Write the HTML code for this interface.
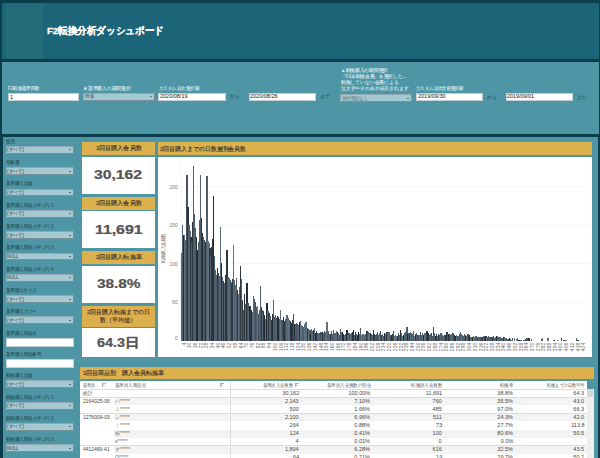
<!DOCTYPE html><html><head><meta charset="utf-8"><style>
*{margin:0;padding:0;box-sizing:border-box}
html,body{width:600px;height:458px;overflow:hidden;background:#0b3d4a;font-family:"Liberation Sans",sans-serif;}
.abs{position:absolute}
.dd{position:absolute;background:#a6c8d1;border:1px solid #75929b;border-top-color:#8eabb3;border-left-color:#8eabb3;}
.dd i{position:absolute;right:2.2px;top:2.4px;width:0;height:0;border-left:1.2px solid transparent;border-right:1.2px solid transparent;border-top:1.9px solid #1a1a1a}
.inp{position:absolute;background:#fff;border:1px solid #c3d0d3;}
.gold{position:absolute;background:#dbb04d;}
.wh{position:absolute;background:#fff}
</style></head><body>
<div class="abs" style="left:2px;top:2.5px;width:597px;height:56.5px;background:#1c6578"></div>
<div class="abs" style="left:6px;top:2.5px;width:36.5px;height:56.5px;background:#246b79"></div>
<div class="f" style="position:absolute;left:46.50px;top:-35.20px;height:130.00px;line-height:130.00px;font-size:100px;color:#fff;white-space:nowrap;transform:scale(0.09539,0.1);transform-origin:left center;font-weight:bold;-webkit-text-stroke:3px #fff;">F2転換分析ダッシュボード</div>
<div class="abs" style="left:1.5px;top:62px;width:597px;height:72px;background:#4e95a5"></div>
<div class="f" style="position:absolute;left:8.30px;top:55.70px;height:65.00px;line-height:65.00px;font-size:50px;color:#d9e9ed;white-space:nowrap;transform:scale(0.08846,0.1);transform-origin:left center;-webkit-text-stroke:1.1px currentColor;">F2転換基準回数</div>
<div class="inp" style="left:7.7px;top:92.7px;width:71.6px;height:8px;"></div>
<div class="f" style="position:absolute;left:10.00px;top:60.95px;height:71.50px;line-height:71.50px;font-size:55.0px;color:#111;white-space:nowrap;transform:scale(0.10000,0.1);transform-origin:left center;">1</div>
<div class="f" style="position:absolute;left:83.30px;top:55.50px;height:65.00px;line-height:65.00px;font-size:50px;color:#d9e9ed;white-space:nowrap;transform:scale(0.09521,0.1);transform-origin:left center;-webkit-text-stroke:1.1px currentColor;">★基準購入の期間選択</div>
<div class="dd" style="left:83.3px;top:92.7px;width:71.4px;height:8.2px;"><i></i></div>
<div class="f" style="position:absolute;left:85.00px;top:63.90px;height:65.00px;line-height:65.00px;font-size:50px;color:#61787f;white-space:nowrap;transform:scale(0.09000,0.1);transform-origin:left center;-webkit-text-stroke:1.1px currentColor;">時季</div>
<div class="f" style="position:absolute;left:158.70px;top:55.50px;height:65.00px;line-height:65.00px;font-size:50px;color:#d9e9ed;white-space:nowrap;transform:scale(0.08811,0.1);transform-origin:left center;-webkit-text-stroke:1.1px currentColor;">カスタム日次選択期</div>
<div class="inp" style="left:158.3px;top:92.7px;width:68px;height:8px;"></div>
<div class="f" style="position:absolute;left:160.00px;top:60.45px;height:71.50px;line-height:71.50px;font-size:55.0px;color:#111;white-space:nowrap;transform:scale(0.09990,0.1);transform-origin:left center;">2020/08/19</div>
<div class="f" style="position:absolute;left:229.50px;top:64.20px;height:65.00px;line-height:65.00px;font-size:50px;color:#2a5863;white-space:nowrap;transform:scale(0.09020,0.1);transform-origin:left center;-webkit-text-stroke:1.1px currentColor;">から</div>
<div class="inp" style="left:248.5px;top:92.5px;width:67.7px;height:8px;"></div>
<div class="f" style="position:absolute;left:250.20px;top:60.35px;height:71.50px;line-height:71.50px;font-size:55.0px;color:#111;white-space:nowrap;transform:scale(0.09990,0.1);transform-origin:left center;">2020/08/26</div>
<div class="f" style="position:absolute;left:319.70px;top:64.00px;height:65.00px;line-height:65.00px;font-size:50px;color:#2a5863;white-space:nowrap;transform:scale(0.09118,0.1);transform-origin:left center;-webkit-text-stroke:1.1px currentColor;">まで</div>
<div class="f" style="position:absolute;left:340.70px;top:37.70px;height:65.00px;line-height:65.00px;font-size:50px;color:#d9e9ed;white-space:nowrap;transform:scale(0.09391,0.1);transform-origin:left center;-webkit-text-stroke:1.1px currentColor;">▲転換購入の期間選択</div>
<div class="f" style="position:absolute;left:340.70px;top:43.65px;height:65.00px;line-height:65.00px;font-size:50px;color:#d9e9ed;white-space:nowrap;transform:scale(0.09278,0.1);transform-origin:left center;-webkit-text-stroke:1.1px currentColor;">「F2未転換会員」を選択した…</div>
<div class="f" style="position:absolute;left:340.70px;top:49.60px;height:65.00px;line-height:65.00px;font-size:50px;color:#d9e9ed;white-space:nowrap;transform:scale(0.09441,0.1);transform-origin:left center;-webkit-text-stroke:1.1px currentColor;">転換していない会員による</div>
<div class="f" style="position:absolute;left:340.70px;top:55.55px;height:65.00px;line-height:65.00px;font-size:50px;color:#d9e9ed;white-space:nowrap;transform:scale(0.09549,0.1);transform-origin:left center;-webkit-text-stroke:1.1px currentColor;">注文データのみが表示されます</div>
<div class="dd" style="left:340.3px;top:94.2px;width:71.4px;height:7.6px;"><i></i></div>
<div class="f" style="position:absolute;left:342.00px;top:65.50px;height:65.00px;line-height:65.00px;font-size:50px;color:#65838c;white-space:nowrap;transform:scale(0.08709,0.1);transform-origin:left center;-webkit-text-stroke:1.1px currentColor;">日付指定なし</div>
<div class="f" style="position:absolute;left:416.20px;top:55.50px;height:65.00px;line-height:65.00px;font-size:50px;color:#d9e9ed;white-space:nowrap;transform:scale(0.08628,0.1);transform-origin:left center;-webkit-text-stroke:1.1px currentColor;">カスタム日次比較選択期</div>
<div class="inp" style="left:416.2px;top:92.5px;width:67.1px;height:8.2px;"></div>
<div class="f" style="position:absolute;left:417.60px;top:60.35px;height:71.50px;line-height:71.50px;font-size:55.0px;color:#111;white-space:nowrap;transform:scale(0.09990,0.1);transform-origin:left center;">2019/09/30</div>
<div class="f" style="position:absolute;left:487.00px;top:65.00px;height:65.00px;line-height:65.00px;font-size:50px;color:#2a5863;white-space:nowrap;transform:scale(0.09118,0.1);transform-origin:left center;-webkit-text-stroke:1.1px currentColor;">から</div>
<div class="inp" style="left:505.9px;top:92.7px;width:66.9px;height:7.9px;"></div>
<div class="f" style="position:absolute;left:507.40px;top:60.35px;height:71.50px;line-height:71.50px;font-size:55.0px;color:#111;white-space:nowrap;transform:scale(0.09808,0.1);transform-origin:left center;">2019/09/01</div>
<div class="f" style="position:absolute;left:577.30px;top:65.00px;height:65.00px;line-height:65.00px;font-size:50px;color:#2a5863;white-space:nowrap;transform:scale(0.08529,0.1);transform-origin:left center;-webkit-text-stroke:1.1px currentColor;">まで</div>
<div class="abs" style="left:2.6px;top:136.8px;width:595.4px;height:322px;background:#4e95a5"></div>
<div class="f" style="position:absolute;left:5.50px;top:108.80px;height:65.00px;line-height:65.00px;font-size:50px;color:#2c5561;white-space:nowrap;transform:scale(0.09000,0.1);transform-origin:left center;-webkit-text-stroke:1.1px currentColor;">性別</div>
<div class="dd" style="left:5.5px;top:146.00px;width:68.4px;height:7.8px;"><i></i></div>
<div class="f" style="position:absolute;left:7.00px;top:117.40px;height:65.00px;line-height:65.00px;font-size:50px;color:#3e4e54;white-space:nowrap;transform:scale(0.09124,0.1);transform-origin:left center;-webkit-text-stroke:0.6px currentColor;">(すべて)</div>
<div class="f" style="position:absolute;left:5.50px;top:130.11px;height:65.00px;line-height:65.00px;font-size:50px;color:#2c5561;white-space:nowrap;transform:scale(0.08867,0.1);transform-origin:left center;-webkit-text-stroke:1.1px currentColor;">年齢層</div>
<div class="dd" style="left:5.5px;top:167.31px;width:68.4px;height:7.8px;"><i></i></div>
<div class="f" style="position:absolute;left:7.00px;top:138.71px;height:65.00px;line-height:65.00px;font-size:50px;color:#3e4e54;white-space:nowrap;transform:scale(0.09124,0.1);transform-origin:left center;-webkit-text-stroke:0.6px currentColor;">(すべて)</div>
<div class="f" style="position:absolute;left:5.50px;top:151.42px;height:65.00px;line-height:65.00px;font-size:50px;color:#2c5561;white-space:nowrap;transform:scale(0.08800,0.1);transform-origin:left center;-webkit-text-stroke:1.1px currentColor;">基準購入店舗</div>
<div class="dd" style="left:5.5px;top:188.62px;width:68.4px;height:7.8px;"><i></i></div>
<div class="f" style="position:absolute;left:7.00px;top:160.02px;height:65.00px;line-height:65.00px;font-size:50px;color:#3e4e54;white-space:nowrap;transform:scale(0.09124,0.1);transform-origin:left center;-webkit-text-stroke:0.6px currentColor;">(すべて)</div>
<div class="f" style="position:absolute;left:5.50px;top:172.73px;height:65.00px;line-height:65.00px;font-size:50px;color:#2c5561;white-space:nowrap;transform:scale(0.08913,0.1);transform-origin:left center;-webkit-text-stroke:1.1px currentColor;">基準購入商品カテゴリ1</div>
<div class="dd" style="left:5.5px;top:209.93px;width:68.4px;height:7.8px;"><i></i></div>
<div class="f" style="position:absolute;left:7.00px;top:181.33px;height:65.00px;line-height:65.00px;font-size:50px;color:#3e4e54;white-space:nowrap;transform:scale(0.09124,0.1);transform-origin:left center;-webkit-text-stroke:0.6px currentColor;">(すべて)</div>
<div class="f" style="position:absolute;left:5.50px;top:194.04px;height:65.00px;line-height:65.00px;font-size:50px;color:#2c5561;white-space:nowrap;transform:scale(0.08913,0.1);transform-origin:left center;-webkit-text-stroke:1.1px currentColor;">基準購入商品カテゴリ2</div>
<div class="dd" style="left:5.5px;top:231.24px;width:68.4px;height:7.8px;"><i></i></div>
<div class="f" style="position:absolute;left:7.00px;top:202.64px;height:65.00px;line-height:65.00px;font-size:50px;color:#3e4e54;white-space:nowrap;transform:scale(0.09124,0.1);transform-origin:left center;-webkit-text-stroke:0.6px currentColor;">(すべて)</div>
<div class="f" style="position:absolute;left:5.50px;top:215.35px;height:65.00px;line-height:65.00px;font-size:50px;color:#2c5561;white-space:nowrap;transform:scale(0.08913,0.1);transform-origin:left center;-webkit-text-stroke:1.1px currentColor;">基準購入商品カテゴリ3</div>
<div class="dd" style="left:5.5px;top:252.55px;width:68.4px;height:7.8px;"><i></i></div>
<div class="f" style="position:absolute;left:7.00px;top:223.95px;height:65.00px;line-height:65.00px;font-size:50px;color:#3e4e54;white-space:nowrap;transform:scale(0.08995,0.1);transform-origin:left center;-webkit-text-stroke:0.6px currentColor;">NULL</div>
<div class="f" style="position:absolute;left:5.50px;top:236.66px;height:65.00px;line-height:65.00px;font-size:50px;color:#2c5561;white-space:nowrap;transform:scale(0.08913,0.1);transform-origin:left center;-webkit-text-stroke:1.1px currentColor;">基準購入商品カテゴリ4</div>
<div class="dd" style="left:5.5px;top:273.86px;width:68.4px;height:7.8px;"><i></i></div>
<div class="f" style="position:absolute;left:7.00px;top:245.26px;height:65.00px;line-height:65.00px;font-size:50px;color:#3e4e54;white-space:nowrap;transform:scale(0.08995,0.1);transform-origin:left center;-webkit-text-stroke:0.6px currentColor;">NULL</div>
<div class="f" style="position:absolute;left:5.50px;top:257.97px;height:65.00px;line-height:65.00px;font-size:50px;color:#2c5561;white-space:nowrap;transform:scale(0.08725,0.1);transform-origin:left center;-webkit-text-stroke:1.1px currentColor;">基準購入サイズ</div>
<div class="dd" style="left:5.5px;top:295.17px;width:68.4px;height:7.8px;"><i></i></div>
<div class="f" style="position:absolute;left:7.00px;top:266.57px;height:65.00px;line-height:65.00px;font-size:50px;color:#3e4e54;white-space:nowrap;transform:scale(0.09124,0.1);transform-origin:left center;-webkit-text-stroke:0.6px currentColor;">(すべて)</div>
<div class="f" style="position:absolute;left:5.50px;top:279.28px;height:65.00px;line-height:65.00px;font-size:50px;color:#2c5561;white-space:nowrap;transform:scale(0.08750,0.1);transform-origin:left center;-webkit-text-stroke:1.1px currentColor;">基準購入カラー</div>
<div class="dd" style="left:5.5px;top:316.48px;width:68.4px;height:7.8px;"><i></i></div>
<div class="f" style="position:absolute;left:7.00px;top:287.88px;height:65.00px;line-height:65.00px;font-size:50px;color:#3e4e54;white-space:nowrap;transform:scale(0.09124,0.1);transform-origin:left center;-webkit-text-stroke:0.6px currentColor;">(すべて)</div>
<div class="f" style="position:absolute;left:5.50px;top:300.59px;height:65.00px;line-height:65.00px;font-size:50px;color:#2c5561;white-space:nowrap;transform:scale(0.08800,0.1);transform-origin:left center;-webkit-text-stroke:1.1px currentColor;">基準購入商品名</div>
<div class="inp" style="left:5.5px;top:337.99px;width:68.4px;height:9px;"></div>
<div class="f" style="position:absolute;left:5.50px;top:321.90px;height:65.00px;line-height:65.00px;font-size:50px;color:#2c5561;white-space:nowrap;transform:scale(0.08800,0.1);transform-origin:left center;-webkit-text-stroke:1.1px currentColor;">基準購入商品番号</div>
<div class="inp" style="left:5.5px;top:359.30px;width:68.4px;height:9px;"></div>
<div class="f" style="position:absolute;left:5.50px;top:343.21px;height:65.00px;line-height:65.00px;font-size:50px;color:#2c5561;white-space:nowrap;transform:scale(0.08800,0.1);transform-origin:left center;-webkit-text-stroke:1.1px currentColor;">転換購入店舗</div>
<div class="dd" style="left:5.5px;top:380.41px;width:68.4px;height:7.8px;"><i></i></div>
<div class="f" style="position:absolute;left:7.00px;top:351.81px;height:65.00px;line-height:65.00px;font-size:50px;color:#3e4e54;white-space:nowrap;transform:scale(0.09124,0.1);transform-origin:left center;-webkit-text-stroke:0.6px currentColor;">(すべて)</div>
<div class="f" style="position:absolute;left:5.50px;top:364.52px;height:65.00px;line-height:65.00px;font-size:50px;color:#2c5561;white-space:nowrap;transform:scale(0.08913,0.1);transform-origin:left center;-webkit-text-stroke:1.1px currentColor;">転換購入商品カテゴリ1</div>
<div class="dd" style="left:5.5px;top:401.72px;width:68.4px;height:7.8px;"><i></i></div>
<div class="f" style="position:absolute;left:7.00px;top:373.12px;height:65.00px;line-height:65.00px;font-size:50px;color:#3e4e54;white-space:nowrap;transform:scale(0.09124,0.1);transform-origin:left center;-webkit-text-stroke:0.6px currentColor;">(すべて)</div>
<div class="f" style="position:absolute;left:5.50px;top:385.83px;height:65.00px;line-height:65.00px;font-size:50px;color:#2c5561;white-space:nowrap;transform:scale(0.08913,0.1);transform-origin:left center;-webkit-text-stroke:1.1px currentColor;">転換購入商品カテゴリ2</div>
<div class="dd" style="left:5.5px;top:423.03px;width:68.4px;height:7.8px;"><i></i></div>
<div class="f" style="position:absolute;left:7.00px;top:394.43px;height:65.00px;line-height:65.00px;font-size:50px;color:#3e4e54;white-space:nowrap;transform:scale(0.09124,0.1);transform-origin:left center;-webkit-text-stroke:0.6px currentColor;">(すべて)</div>
<div class="f" style="position:absolute;left:5.50px;top:407.14px;height:65.00px;line-height:65.00px;font-size:50px;color:#2c5561;white-space:nowrap;transform:scale(0.08913,0.1);transform-origin:left center;-webkit-text-stroke:1.1px currentColor;">転換購入商品カテゴリ3</div>
<div class="dd" style="left:5.5px;top:444.34px;width:68.4px;height:7.8px;"><i></i></div>
<div class="f" style="position:absolute;left:7.00px;top:415.74px;height:65.00px;line-height:65.00px;font-size:50px;color:#3e4e54;white-space:nowrap;transform:scale(0.08995,0.1);transform-origin:left center;-webkit-text-stroke:0.6px currentColor;">NULL</div>
<div class="f" style="position:absolute;left:5.50px;top:428.45px;height:65.00px;line-height:65.00px;font-size:50px;color:#2c5561;white-space:nowrap;transform:scale(0.08913,0.1);transform-origin:left center;-webkit-text-stroke:1.1px currentColor;">転換購入商品カテゴリ4</div>
<div class="dd" style="left:5.5px;top:465.65px;width:68.4px;height:7.8px;"><i></i></div>
<div class="f" style="position:absolute;left:7.00px;top:437.05px;height:65.00px;line-height:65.00px;font-size:50px;color:#3e4e54;white-space:nowrap;transform:scale(0.08995,0.1);transform-origin:left center;-webkit-text-stroke:0.6px currentColor;">NULL</div>
<div class="gold" style="left:81.8px;top:142.4px;width:73.4px;height:12.9px"></div>
<div class="wh" style="left:81.8px;top:156.6px;width:73.4px;height:37.6px"></div>
<div class="f" style="position:absolute;left:95.60px;top:109.45px;height:78.00px;line-height:78.00px;font-size:60px;color:#2e2e2e;white-space:nowrap;transform:scale(0.10058,0.1);transform-origin:left center;-webkit-text-stroke:1.1px currentColor;">1回目購入会員数</div>
<div class="gold" style="left:81.8px;top:197px;width:73.4px;height:13.0px"></div>
<div class="wh" style="left:81.8px;top:211.3px;width:73.4px;height:37.0px"></div>
<div class="f" style="position:absolute;left:95.60px;top:164.10px;height:78.00px;line-height:78.00px;font-size:60px;color:#2e2e2e;white-space:nowrap;transform:scale(0.10058,0.1);transform-origin:left center;-webkit-text-stroke:1.1px currentColor;">2回目購入会員数</div>
<div class="gold" style="left:81.8px;top:250.8px;width:73.4px;height:13.5px"></div>
<div class="wh" style="left:81.8px;top:266px;width:73.4px;height:36.7px"></div>
<div class="f" style="position:absolute;left:95.60px;top:218.15px;height:78.00px;line-height:78.00px;font-size:60px;color:#2e2e2e;white-space:nowrap;transform:scale(0.10058,0.1);transform-origin:left center;-webkit-text-stroke:1.1px currentColor;">2回目購入転換率</div>
<div class="gold" style="left:81.8px;top:306px;width:73.4px;height:20.8px"></div>
<div class="wh" style="left:81.8px;top:328.2px;width:73.4px;height:28.6px"></div>
<div class="f" style="position:absolute;left:86.50px;top:273.20px;height:78.00px;line-height:78.00px;font-size:60px;color:#2e2e2e;white-space:nowrap;transform:scale(0.09900,0.1);transform-origin:left center;-webkit-text-stroke:1.1px currentColor;">2回目購入転換までの日</div>
<div class="f" style="position:absolute;left:99.60px;top:280.60px;height:78.00px;line-height:78.00px;font-size:60px;color:#2e2e2e;white-space:nowrap;transform:scale(0.09861,0.1);transform-origin:left center;-webkit-text-stroke:1.1px currentColor;">数（平均値）</div>
<div class="f" style="position:absolute;left:94.00px;top:89.70px;height:169.00px;line-height:169.00px;font-size:130px;color:#545454;white-space:nowrap;transform:scale(0.12072,0.1);transform-origin:left center;font-weight:bold;-webkit-text-stroke:2.5px currentColor;">30,162</div>
<div class="f" style="position:absolute;left:94.50px;top:144.50px;height:169.00px;line-height:169.00px;font-size:130px;color:#545454;white-space:nowrap;transform:scale(0.12165,0.1);transform-origin:left center;font-weight:bold;-webkit-text-stroke:2.5px currentColor;">11,691</div>
<div class="f" style="position:absolute;left:96.50px;top:199.10px;height:169.00px;line-height:169.00px;font-size:130px;color:#545454;white-space:nowrap;transform:scale(0.11801,0.1);transform-origin:left center;font-weight:bold;-webkit-text-stroke:2.5px currentColor;">38.8%</div>
<div class="f" style="position:absolute;left:96.50px;top:257.70px;height:169.00px;line-height:169.00px;font-size:130px;color:#545454;white-space:nowrap;transform:scale(0.11096,0.1);transform-origin:left center;font-weight:bold;-webkit-text-stroke:2.5px currentColor;">64.3日</div>
<div class="gold" style="left:157.8px;top:142.4px;width:434.4px;height:13px"></div>
<div class="f" style="position:absolute;left:159.80px;top:110.00px;height:78.00px;line-height:78.00px;font-size:60px;color:#2e2e2e;white-space:nowrap;transform:scale(0.09836,0.1);transform-origin:left center;-webkit-text-stroke:1.1px currentColor;">2回目購入までの日数層別会員数</div>
<div class="wh" style="left:158.3px;top:157px;width:433.9px;height:199.7px"></div>
<svg class="abs" style="left:0;top:0" width="600" height="458" viewBox="0 0 600 458"><line x1="180.8" x2="180.8" y1="160" y2="340.5" stroke="#f2f2f2" stroke-width="0.8"/><line x1="180" x2="591" y1="302.0" y2="302.0" stroke="#f3f3f3" stroke-width="0.7"/><line x1="180" x2="591" y1="263.5" y2="263.5" stroke="#f3f3f3" stroke-width="0.7"/><line x1="180" x2="591" y1="225.0" y2="225.0" stroke="#f3f3f3" stroke-width="0.7"/><line x1="180" x2="591" y1="186.5" y2="186.5" stroke="#f3f3f3" stroke-width="0.7"/><text x="177.8" y="339.6" font-size="5" fill="#777" text-anchor="end" font-family="Liberation Sans">0</text><text x="177.8" y="304.3" font-size="5" fill="#777" text-anchor="end" font-family="Liberation Sans">50</text><text x="177.8" y="265.8" font-size="5" fill="#777" text-anchor="end" font-family="Liberation Sans">100</text><text x="177.8" y="227.3" font-size="5" fill="#777" text-anchor="end" font-family="Liberation Sans">150</text><text x="177.8" y="188.8" font-size="5" fill="#777" text-anchor="end" font-family="Liberation Sans">200</text><text transform="translate(165.3,248.3) rotate(-90) scale(0.1)" font-size="46" textLength="300" lengthAdjust="spacingAndGlyphs" fill="#555" text-anchor="middle" font-family="Liberation Sans">転換購入会員数</text><rect x="180.77" y="252.72" width="1.238" height="87.78" fill="#56687a" shape-rendering="crispEdges"/><rect x="181.72" y="225.00" width="1.238" height="115.50" fill="#4f5e6b" shape-rendering="crispEdges"/><rect x="182.67" y="235.01" width="1.238" height="105.49" fill="#262e35" shape-rendering="crispEdges"/><rect x="183.62" y="235.01" width="1.238" height="105.49" fill="#5f7181" shape-rendering="crispEdges"/><rect x="184.58" y="239.63" width="1.238" height="100.87" fill="#4f5e6b" shape-rendering="crispEdges"/><rect x="185.53" y="201.13" width="1.238" height="139.37" fill="#4f5e6b" shape-rendering="crispEdges"/><rect x="186.48" y="174.95" width="1.238" height="165.55" fill="#46535e" shape-rendering="crispEdges"/><rect x="187.43" y="206.52" width="1.238" height="133.98" fill="#2e373f" shape-rendering="crispEdges"/><rect x="188.38" y="225.00" width="1.238" height="115.50" fill="#4f5e6b" shape-rendering="crispEdges"/><rect x="189.34" y="231.16" width="1.238" height="109.34" fill="#56687a" shape-rendering="crispEdges"/><rect x="190.29" y="236.55" width="1.238" height="103.95" fill="#2e373f" shape-rendering="crispEdges"/><rect x="191.24" y="243.48" width="1.238" height="97.02" fill="#4f5e6b" shape-rendering="crispEdges"/><rect x="192.19" y="221.92" width="1.238" height="118.58" fill="#2e373f" shape-rendering="crispEdges"/><rect x="193.14" y="166.48" width="1.238" height="174.02" fill="#4f5e6b" shape-rendering="crispEdges"/><rect x="194.10" y="214.22" width="1.238" height="126.28" fill="#4f5e6b" shape-rendering="crispEdges"/><rect x="195.05" y="228.08" width="1.238" height="112.42" fill="#4f5e6b" shape-rendering="crispEdges"/><rect x="196.00" y="237.32" width="1.238" height="103.18" fill="#262e35" shape-rendering="crispEdges"/><rect x="196.95" y="249.64" width="1.238" height="90.86" fill="#262e35" shape-rendering="crispEdges"/><rect x="197.90" y="241.94" width="1.238" height="98.56" fill="#4f5e6b" shape-rendering="crispEdges"/><rect x="198.86" y="219.61" width="1.238" height="120.89" fill="#4f5e6b" shape-rendering="crispEdges"/><rect x="199.81" y="174.95" width="1.238" height="165.55" fill="#4f5e6b" shape-rendering="crispEdges"/><rect x="200.76" y="218.07" width="1.238" height="122.43" fill="#2e373f" shape-rendering="crispEdges"/><rect x="201.71" y="232.70" width="1.238" height="107.80" fill="#262e35" shape-rendering="crispEdges"/><rect x="202.66" y="237.32" width="1.238" height="103.18" fill="#4f5e6b" shape-rendering="crispEdges"/><rect x="203.62" y="240.40" width="1.238" height="100.10" fill="#46535e" shape-rendering="crispEdges"/><rect x="204.57" y="241.94" width="1.238" height="98.56" fill="#2e373f" shape-rendering="crispEdges"/><rect x="205.52" y="223.46" width="1.238" height="117.04" fill="#4f5e6b" shape-rendering="crispEdges"/><rect x="206.47" y="175.72" width="1.238" height="164.78" fill="#4f5e6b" shape-rendering="crispEdges"/><rect x="207.42" y="241.17" width="1.238" height="99.33" fill="#5f7181" shape-rendering="crispEdges"/><rect x="208.38" y="243.48" width="1.238" height="97.02" fill="#5f7181" shape-rendering="crispEdges"/><rect x="209.33" y="248.10" width="1.238" height="92.40" fill="#2e373f" shape-rendering="crispEdges"/><rect x="210.28" y="256.57" width="1.238" height="83.93" fill="#4f5e6b" shape-rendering="crispEdges"/><rect x="211.23" y="246.56" width="1.238" height="93.94" fill="#2e373f" shape-rendering="crispEdges"/><rect x="212.18" y="238.86" width="1.238" height="101.64" fill="#2e373f" shape-rendering="crispEdges"/><rect x="213.14" y="195.74" width="1.238" height="144.76" fill="#262e35" shape-rendering="crispEdges"/><rect x="214.09" y="255.80" width="1.238" height="84.70" fill="#4f5e6b" shape-rendering="crispEdges"/><rect x="215.04" y="269.66" width="1.238" height="70.84" fill="#4f5e6b" shape-rendering="crispEdges"/><rect x="215.99" y="275.05" width="1.238" height="65.45" fill="#4f5e6b" shape-rendering="crispEdges"/><rect x="216.94" y="268.12" width="1.238" height="72.38" fill="#2e373f" shape-rendering="crispEdges"/><rect x="217.90" y="272.74" width="1.238" height="67.76" fill="#46535e" shape-rendering="crispEdges"/><rect x="218.85" y="275.82" width="1.238" height="64.68" fill="#4f5e6b" shape-rendering="crispEdges"/><rect x="219.80" y="227.31" width="1.238" height="113.19" fill="#56687a" shape-rendering="crispEdges"/><rect x="220.75" y="262.73" width="1.238" height="77.77" fill="#262e35" shape-rendering="crispEdges"/><rect x="221.70" y="277.36" width="1.238" height="63.14" fill="#4f5e6b" shape-rendering="crispEdges"/><rect x="222.66" y="281.21" width="1.238" height="59.29" fill="#2e373f" shape-rendering="crispEdges"/><rect x="223.61" y="282.75" width="1.238" height="57.75" fill="#4f5e6b" shape-rendering="crispEdges"/><rect x="224.56" y="275.05" width="1.238" height="65.45" fill="#2e373f" shape-rendering="crispEdges"/><rect x="225.51" y="270.43" width="1.238" height="70.07" fill="#56687a" shape-rendering="crispEdges"/><rect x="226.46" y="250.41" width="1.238" height="90.09" fill="#2e373f" shape-rendering="crispEdges"/><rect x="227.42" y="277.36" width="1.238" height="63.14" fill="#46535e" shape-rendering="crispEdges"/><rect x="228.37" y="278.13" width="1.238" height="62.37" fill="#5f7181" shape-rendering="crispEdges"/><rect x="229.32" y="280.44" width="1.238" height="60.06" fill="#4f5e6b" shape-rendering="crispEdges"/><rect x="230.27" y="281.98" width="1.238" height="58.52" fill="#4f5e6b" shape-rendering="crispEdges"/><rect x="231.22" y="283.52" width="1.238" height="56.98" fill="#2e373f" shape-rendering="crispEdges"/><rect x="232.18" y="278.90" width="1.238" height="61.60" fill="#2e373f" shape-rendering="crispEdges"/><rect x="233.13" y="245.02" width="1.238" height="95.48" fill="#5f7181" shape-rendering="crispEdges"/><rect x="234.08" y="280.44" width="1.238" height="60.06" fill="#4f5e6b" shape-rendering="crispEdges"/><rect x="235.03" y="285.06" width="1.238" height="55.44" fill="#56687a" shape-rendering="crispEdges"/><rect x="235.98" y="278.13" width="1.238" height="62.37" fill="#4f5e6b" shape-rendering="crispEdges"/><rect x="236.94" y="289.68" width="1.238" height="50.82" fill="#2e373f" shape-rendering="crispEdges"/><rect x="237.89" y="293.53" width="1.238" height="46.97" fill="#5f7181" shape-rendering="crispEdges"/><rect x="238.84" y="286.60" width="1.238" height="53.90" fill="#4f5e6b" shape-rendering="crispEdges"/><rect x="239.79" y="265.81" width="1.238" height="74.69" fill="#2e373f" shape-rendering="crispEdges"/><rect x="240.74" y="278.90" width="1.238" height="61.60" fill="#4f5e6b" shape-rendering="crispEdges"/><rect x="241.70" y="300.46" width="1.238" height="40.04" fill="#2e373f" shape-rendering="crispEdges"/><rect x="242.65" y="309.70" width="1.238" height="30.80" fill="#4f5e6b" shape-rendering="crispEdges"/><rect x="243.60" y="294.30" width="1.238" height="46.20" fill="#262e35" shape-rendering="crispEdges"/><rect x="244.55" y="303.54" width="1.238" height="36.96" fill="#5f7181" shape-rendering="crispEdges"/><rect x="245.50" y="298.15" width="1.238" height="42.35" fill="#2e373f" shape-rendering="crispEdges"/><rect x="246.46" y="282.75" width="1.238" height="57.75" fill="#262e35" shape-rendering="crispEdges"/><rect x="247.41" y="302.77" width="1.238" height="37.73" fill="#46535e" shape-rendering="crispEdges"/><rect x="248.36" y="311.24" width="1.238" height="29.26" fill="#56687a" shape-rendering="crispEdges"/><rect x="249.31" y="305.85" width="1.238" height="34.65" fill="#262e35" shape-rendering="crispEdges"/><rect x="250.26" y="307.39" width="1.238" height="33.11" fill="#2e373f" shape-rendering="crispEdges"/><rect x="251.22" y="309.70" width="1.238" height="30.80" fill="#262e35" shape-rendering="crispEdges"/><rect x="252.17" y="312.01" width="1.238" height="28.49" fill="#56687a" shape-rendering="crispEdges"/><rect x="253.12" y="295.84" width="1.238" height="44.66" fill="#56687a" shape-rendering="crispEdges"/><rect x="254.07" y="298.92" width="1.238" height="41.58" fill="#4f5e6b" shape-rendering="crispEdges"/><rect x="255.02" y="302.00" width="1.238" height="38.50" fill="#46535e" shape-rendering="crispEdges"/><rect x="255.98" y="307.39" width="1.238" height="33.11" fill="#4f5e6b" shape-rendering="crispEdges"/><rect x="256.93" y="305.85" width="1.238" height="34.65" fill="#5f7181" shape-rendering="crispEdges"/><rect x="257.88" y="314.32" width="1.238" height="26.18" fill="#46535e" shape-rendering="crispEdges"/><rect x="258.83" y="309.70" width="1.238" height="30.80" fill="#4f5e6b" shape-rendering="crispEdges"/><rect x="259.78" y="285.83" width="1.238" height="54.67" fill="#4f5e6b" shape-rendering="crispEdges"/><rect x="260.74" y="306.62" width="1.238" height="33.88" fill="#2e373f" shape-rendering="crispEdges"/><rect x="261.69" y="309.70" width="1.238" height="30.80" fill="#56687a" shape-rendering="crispEdges"/><rect x="262.64" y="311.24" width="1.238" height="29.26" fill="#2e373f" shape-rendering="crispEdges"/><rect x="263.59" y="315.09" width="1.238" height="25.41" fill="#262e35" shape-rendering="crispEdges"/><rect x="264.54" y="318.94" width="1.238" height="21.56" fill="#56687a" shape-rendering="crispEdges"/><rect x="265.50" y="308.16" width="1.238" height="32.34" fill="#5f7181" shape-rendering="crispEdges"/><rect x="266.45" y="302.77" width="1.238" height="37.73" fill="#262e35" shape-rendering="crispEdges"/><rect x="267.40" y="311.24" width="1.238" height="29.26" fill="#56687a" shape-rendering="crispEdges"/><rect x="268.35" y="312.78" width="1.238" height="27.72" fill="#2e373f" shape-rendering="crispEdges"/><rect x="269.30" y="315.86" width="1.238" height="24.64" fill="#4f5e6b" shape-rendering="crispEdges"/><rect x="270.26" y="317.40" width="1.238" height="23.10" fill="#4f5e6b" shape-rendering="crispEdges"/><rect x="271.21" y="320.48" width="1.238" height="20.02" fill="#2e373f" shape-rendering="crispEdges"/><rect x="272.16" y="314.32" width="1.238" height="26.18" fill="#262e35" shape-rendering="crispEdges"/><rect x="273.11" y="300.46" width="1.238" height="40.04" fill="#4f5e6b" shape-rendering="crispEdges"/><rect x="274.06" y="316.63" width="1.238" height="23.87" fill="#46535e" shape-rendering="crispEdges"/><rect x="275.02" y="315.09" width="1.238" height="25.41" fill="#56687a" shape-rendering="crispEdges"/><rect x="275.97" y="318.17" width="1.238" height="22.33" fill="#4f5e6b" shape-rendering="crispEdges"/><rect x="276.92" y="315.86" width="1.238" height="24.64" fill="#262e35" shape-rendering="crispEdges"/><rect x="277.87" y="317.40" width="1.238" height="23.10" fill="#262e35" shape-rendering="crispEdges"/><rect x="278.82" y="318.94" width="1.238" height="21.56" fill="#4f5e6b" shape-rendering="crispEdges"/><rect x="279.78" y="309.70" width="1.238" height="30.80" fill="#5f7181" shape-rendering="crispEdges"/><rect x="280.73" y="319.71" width="1.238" height="20.79" fill="#4f5e6b" shape-rendering="crispEdges"/><rect x="281.68" y="320.48" width="1.238" height="20.02" fill="#46535e" shape-rendering="crispEdges"/><rect x="282.63" y="317.40" width="1.238" height="23.10" fill="#2e373f" shape-rendering="crispEdges"/><rect x="283.58" y="321.25" width="1.238" height="19.25" fill="#2e373f" shape-rendering="crispEdges"/><rect x="284.54" y="318.94" width="1.238" height="21.56" fill="#46535e" shape-rendering="crispEdges"/><rect x="285.49" y="319.71" width="1.238" height="20.79" fill="#46535e" shape-rendering="crispEdges"/><rect x="286.44" y="315.09" width="1.238" height="25.41" fill="#56687a" shape-rendering="crispEdges"/><rect x="287.39" y="318.17" width="1.238" height="22.33" fill="#56687a" shape-rendering="crispEdges"/><rect x="288.34" y="320.48" width="1.238" height="20.02" fill="#5f7181" shape-rendering="crispEdges"/><rect x="289.30" y="322.02" width="1.238" height="18.48" fill="#56687a" shape-rendering="crispEdges"/><rect x="290.25" y="321.25" width="1.238" height="19.25" fill="#2e373f" shape-rendering="crispEdges"/><rect x="291.20" y="322.79" width="1.238" height="17.71" fill="#262e35" shape-rendering="crispEdges"/><rect x="292.15" y="319.71" width="1.238" height="20.79" fill="#2e373f" shape-rendering="crispEdges"/><rect x="293.10" y="314.32" width="1.238" height="26.18" fill="#46535e" shape-rendering="crispEdges"/><rect x="294.06" y="323.56" width="1.238" height="16.94" fill="#262e35" shape-rendering="crispEdges"/><rect x="295.01" y="324.33" width="1.238" height="16.17" fill="#4f5e6b" shape-rendering="crispEdges"/><rect x="295.96" y="322.79" width="1.238" height="17.71" fill="#46535e" shape-rendering="crispEdges"/><rect x="296.91" y="323.56" width="1.238" height="16.94" fill="#4f5e6b" shape-rendering="crispEdges"/><rect x="297.86" y="325.10" width="1.238" height="15.40" fill="#56687a" shape-rendering="crispEdges"/><rect x="298.82" y="322.02" width="1.238" height="18.48" fill="#262e35" shape-rendering="crispEdges"/><rect x="299.77" y="321.25" width="1.238" height="19.25" fill="#5f7181" shape-rendering="crispEdges"/><rect x="300.72" y="325.10" width="1.238" height="15.40" fill="#5f7181" shape-rendering="crispEdges"/><rect x="301.67" y="325.87" width="1.238" height="14.63" fill="#4f5e6b" shape-rendering="crispEdges"/><rect x="302.62" y="326.64" width="1.238" height="13.86" fill="#4f5e6b" shape-rendering="crispEdges"/><rect x="303.58" y="324.33" width="1.238" height="16.17" fill="#5f7181" shape-rendering="crispEdges"/><rect x="304.53" y="327.41" width="1.238" height="13.09" fill="#5f7181" shape-rendering="crispEdges"/><rect x="305.48" y="322.02" width="1.238" height="18.48" fill="#56687a" shape-rendering="crispEdges"/><rect x="306.43" y="328.18" width="1.238" height="12.32" fill="#5f7181" shape-rendering="crispEdges"/><rect x="307.38" y="328.95" width="1.238" height="11.55" fill="#2e373f" shape-rendering="crispEdges"/><rect x="308.34" y="329.72" width="1.238" height="10.78" fill="#5f7181" shape-rendering="crispEdges"/><rect x="309.29" y="330.49" width="1.238" height="10.01" fill="#46535e" shape-rendering="crispEdges"/><rect x="310.24" y="334.34" width="1.238" height="6.16" fill="#262e35" shape-rendering="crispEdges"/><rect x="311.19" y="328.95" width="1.238" height="11.55" fill="#56687a" shape-rendering="crispEdges"/><rect x="312.14" y="331.26" width="1.238" height="9.24" fill="#5f7181" shape-rendering="crispEdges"/><rect x="313.10" y="329.72" width="1.238" height="10.78" fill="#262e35" shape-rendering="crispEdges"/><rect x="314.05" y="327.53" width="1.238" height="12.97" fill="#56687a" shape-rendering="crispEdges"/><rect x="315.00" y="333.17" width="1.238" height="7.33" fill="#262e35" shape-rendering="crispEdges"/><rect x="315.95" y="331.34" width="1.238" height="9.16" fill="#2e373f" shape-rendering="crispEdges"/><rect x="316.90" y="332.96" width="1.238" height="7.54" fill="#4f5e6b" shape-rendering="crispEdges"/><rect x="317.86" y="332.56" width="1.238" height="7.94" fill="#56687a" shape-rendering="crispEdges"/><rect x="318.81" y="333.25" width="1.238" height="7.25" fill="#4f5e6b" shape-rendering="crispEdges"/><rect x="319.76" y="331.95" width="1.238" height="8.55" fill="#46535e" shape-rendering="crispEdges"/><rect x="320.71" y="331.63" width="1.238" height="8.87" fill="#4f5e6b" shape-rendering="crispEdges"/><rect x="321.66" y="332.09" width="1.238" height="8.41" fill="#2e373f" shape-rendering="crispEdges"/><rect x="322.62" y="333.16" width="1.238" height="7.34" fill="#4f5e6b" shape-rendering="crispEdges"/><rect x="323.57" y="330.51" width="1.238" height="9.99" fill="#46535e" shape-rendering="crispEdges"/><rect x="324.52" y="331.95" width="1.238" height="8.55" fill="#5f7181" shape-rendering="crispEdges"/><rect x="325.47" y="332.70" width="1.238" height="7.80" fill="#56687a" shape-rendering="crispEdges"/><rect x="326.42" y="322.02" width="1.238" height="18.48" fill="#5f7181" shape-rendering="crispEdges"/><rect x="327.38" y="330.59" width="1.238" height="9.91" fill="#4f5e6b" shape-rendering="crispEdges"/><rect x="328.33" y="334.20" width="1.238" height="6.30" fill="#4f5e6b" shape-rendering="crispEdges"/><rect x="329.28" y="334.26" width="1.238" height="6.24" fill="#5f7181" shape-rendering="crispEdges"/><rect x="330.23" y="333.93" width="1.238" height="6.57" fill="#262e35" shape-rendering="crispEdges"/><rect x="331.18" y="331.22" width="1.238" height="9.28" fill="#4f5e6b" shape-rendering="crispEdges"/><rect x="332.14" y="333.93" width="1.238" height="6.57" fill="#4f5e6b" shape-rendering="crispEdges"/><rect x="333.09" y="329.72" width="1.238" height="10.78" fill="#4f5e6b" shape-rendering="crispEdges"/><rect x="334.04" y="333.36" width="1.238" height="7.14" fill="#56687a" shape-rendering="crispEdges"/><rect x="334.99" y="332.58" width="1.238" height="7.92" fill="#56687a" shape-rendering="crispEdges"/><rect x="335.94" y="331.14" width="1.238" height="9.36" fill="#5f7181" shape-rendering="crispEdges"/><rect x="336.90" y="331.64" width="1.238" height="8.86" fill="#2e373f" shape-rendering="crispEdges"/><rect x="337.85" y="332.62" width="1.238" height="7.88" fill="#5f7181" shape-rendering="crispEdges"/><rect x="338.80" y="335.27" width="1.238" height="5.23" fill="#46535e" shape-rendering="crispEdges"/><rect x="339.75" y="328.95" width="1.238" height="11.55" fill="#46535e" shape-rendering="crispEdges"/><rect x="340.70" y="331.60" width="1.238" height="8.90" fill="#5f7181" shape-rendering="crispEdges"/><rect x="341.66" y="332.33" width="1.238" height="8.17" fill="#262e35" shape-rendering="crispEdges"/><rect x="342.61" y="334.01" width="1.238" height="6.49" fill="#262e35" shape-rendering="crispEdges"/><rect x="343.56" y="335.24" width="1.238" height="5.26" fill="#5f7181" shape-rendering="crispEdges"/><rect x="344.51" y="334.02" width="1.238" height="6.48" fill="#4f5e6b" shape-rendering="crispEdges"/><rect x="345.46" y="335.41" width="1.238" height="5.09" fill="#4f5e6b" shape-rendering="crispEdges"/><rect x="346.42" y="330.49" width="1.238" height="10.01" fill="#262e35" shape-rendering="crispEdges"/><rect x="347.37" y="335.04" width="1.238" height="5.46" fill="#56687a" shape-rendering="crispEdges"/><rect x="348.32" y="333.25" width="1.238" height="7.25" fill="#4f5e6b" shape-rendering="crispEdges"/><rect x="349.27" y="335.72" width="1.238" height="4.78" fill="#4f5e6b" shape-rendering="crispEdges"/><rect x="350.22" y="333.54" width="1.238" height="6.96" fill="#56687a" shape-rendering="crispEdges"/><rect x="351.18" y="333.24" width="1.238" height="7.26" fill="#4f5e6b" shape-rendering="crispEdges"/><rect x="352.13" y="332.19" width="1.238" height="8.31" fill="#2e373f" shape-rendering="crispEdges"/><rect x="353.08" y="329.72" width="1.238" height="10.78" fill="#262e35" shape-rendering="crispEdges"/><rect x="354.03" y="335.17" width="1.238" height="5.33" fill="#56687a" shape-rendering="crispEdges"/><rect x="354.98" y="331.91" width="1.238" height="8.59" fill="#2e373f" shape-rendering="crispEdges"/><rect x="355.94" y="334.31" width="1.238" height="6.19" fill="#4f5e6b" shape-rendering="crispEdges"/><rect x="356.89" y="335.33" width="1.238" height="5.17" fill="#262e35" shape-rendering="crispEdges"/><rect x="357.84" y="331.81" width="1.238" height="8.69" fill="#262e35" shape-rendering="crispEdges"/><rect x="358.79" y="333.88" width="1.238" height="6.62" fill="#56687a" shape-rendering="crispEdges"/><rect x="359.74" y="328.18" width="1.238" height="12.32" fill="#4f5e6b" shape-rendering="crispEdges"/><rect x="360.70" y="335.25" width="1.238" height="5.25" fill="#5f7181" shape-rendering="crispEdges"/><rect x="361.65" y="334.47" width="1.238" height="6.03" fill="#56687a" shape-rendering="crispEdges"/><rect x="362.60" y="333.94" width="1.238" height="6.56" fill="#5f7181" shape-rendering="crispEdges"/><rect x="363.55" y="335.21" width="1.238" height="5.29" fill="#4f5e6b" shape-rendering="crispEdges"/><rect x="364.50" y="335.05" width="1.238" height="5.45" fill="#2e373f" shape-rendering="crispEdges"/><rect x="365.46" y="334.44" width="1.238" height="6.06" fill="#5f7181" shape-rendering="crispEdges"/><rect x="366.41" y="331.26" width="1.238" height="9.24" fill="#2e373f" shape-rendering="crispEdges"/><rect x="367.36" y="332.28" width="1.238" height="8.22" fill="#46535e" shape-rendering="crispEdges"/><rect x="368.31" y="333.82" width="1.238" height="6.68" fill="#5f7181" shape-rendering="crispEdges"/><rect x="369.26" y="332.51" width="1.238" height="7.99" fill="#5f7181" shape-rendering="crispEdges"/><rect x="370.22" y="332.60" width="1.238" height="7.90" fill="#2e373f" shape-rendering="crispEdges"/><rect x="371.17" y="334.49" width="1.238" height="6.01" fill="#4f5e6b" shape-rendering="crispEdges"/><rect x="372.12" y="334.54" width="1.238" height="5.96" fill="#4f5e6b" shape-rendering="crispEdges"/><rect x="373.07" y="330.49" width="1.238" height="10.01" fill="#2e373f" shape-rendering="crispEdges"/><rect x="374.02" y="333.82" width="1.238" height="6.68" fill="#2e373f" shape-rendering="crispEdges"/><rect x="374.98" y="334.66" width="1.238" height="5.84" fill="#4f5e6b" shape-rendering="crispEdges"/><rect x="375.93" y="333.56" width="1.238" height="6.94" fill="#46535e" shape-rendering="crispEdges"/><rect x="376.88" y="332.12" width="1.238" height="8.38" fill="#46535e" shape-rendering="crispEdges"/><rect x="377.83" y="335.20" width="1.238" height="5.30" fill="#4f5e6b" shape-rendering="crispEdges"/><rect x="378.78" y="332.79" width="1.238" height="7.71" fill="#5f7181" shape-rendering="crispEdges"/><rect x="379.74" y="331.26" width="1.238" height="9.24" fill="#46535e" shape-rendering="crispEdges"/><rect x="380.69" y="335.10" width="1.238" height="5.40" fill="#2e373f" shape-rendering="crispEdges"/><rect x="381.64" y="334.08" width="1.238" height="6.42" fill="#5f7181" shape-rendering="crispEdges"/><rect x="382.59" y="335.88" width="1.238" height="4.62" fill="#4f5e6b" shape-rendering="crispEdges"/><rect x="383.54" y="332.95" width="1.238" height="7.55" fill="#262e35" shape-rendering="crispEdges"/><rect x="384.50" y="335.00" width="1.238" height="5.50" fill="#5f7181" shape-rendering="crispEdges"/><rect x="385.45" y="333.68" width="1.238" height="6.82" fill="#56687a" shape-rendering="crispEdges"/><rect x="386.40" y="332.03" width="1.238" height="8.47" fill="#262e35" shape-rendering="crispEdges"/><rect x="387.35" y="332.91" width="1.238" height="7.59" fill="#5f7181" shape-rendering="crispEdges"/><rect x="388.30" y="332.23" width="1.238" height="8.27" fill="#56687a" shape-rendering="crispEdges"/><rect x="389.26" y="335.72" width="1.238" height="4.78" fill="#4f5e6b" shape-rendering="crispEdges"/><rect x="390.21" y="335.17" width="1.238" height="5.33" fill="#4f5e6b" shape-rendering="crispEdges"/><rect x="391.16" y="334.75" width="1.238" height="5.75" fill="#262e35" shape-rendering="crispEdges"/><rect x="392.11" y="333.66" width="1.238" height="6.84" fill="#2e373f" shape-rendering="crispEdges"/><rect x="393.06" y="331.26" width="1.238" height="9.24" fill="#46535e" shape-rendering="crispEdges"/><rect x="394.02" y="336.05" width="1.238" height="4.45" fill="#5f7181" shape-rendering="crispEdges"/><rect x="394.97" y="334.75" width="1.238" height="5.75" fill="#5f7181" shape-rendering="crispEdges"/><rect x="395.92" y="335.74" width="1.238" height="4.76" fill="#5f7181" shape-rendering="crispEdges"/><rect x="396.87" y="335.62" width="1.238" height="4.88" fill="#262e35" shape-rendering="crispEdges"/><rect x="397.82" y="333.11" width="1.238" height="7.39" fill="#46535e" shape-rendering="crispEdges"/><rect x="398.78" y="335.33" width="1.238" height="5.17" fill="#4f5e6b" shape-rendering="crispEdges"/><rect x="399.73" y="330.49" width="1.238" height="10.01" fill="#262e35" shape-rendering="crispEdges"/><rect x="400.68" y="333.11" width="1.238" height="7.39" fill="#56687a" shape-rendering="crispEdges"/><rect x="401.63" y="335.77" width="1.238" height="4.73" fill="#5f7181" shape-rendering="crispEdges"/><rect x="402.58" y="334.61" width="1.238" height="5.89" fill="#262e35" shape-rendering="crispEdges"/><rect x="403.54" y="333.31" width="1.238" height="7.19" fill="#4f5e6b" shape-rendering="crispEdges"/><rect x="404.49" y="333.39" width="1.238" height="7.11" fill="#4f5e6b" shape-rendering="crispEdges"/><rect x="405.44" y="332.39" width="1.238" height="8.11" fill="#4f5e6b" shape-rendering="crispEdges"/><rect x="406.39" y="327.41" width="1.238" height="13.09" fill="#4f5e6b" shape-rendering="crispEdges"/><rect x="407.34" y="333.92" width="1.238" height="6.58" fill="#262e35" shape-rendering="crispEdges"/><rect x="408.30" y="333.12" width="1.238" height="7.38" fill="#4f5e6b" shape-rendering="crispEdges"/><rect x="409.25" y="333.86" width="1.238" height="6.64" fill="#2e373f" shape-rendering="crispEdges"/><rect x="410.20" y="332.49" width="1.238" height="8.01" fill="#5f7181" shape-rendering="crispEdges"/><rect x="411.15" y="332.66" width="1.238" height="7.84" fill="#4f5e6b" shape-rendering="crispEdges"/><rect x="412.10" y="334.11" width="1.238" height="6.39" fill="#4f5e6b" shape-rendering="crispEdges"/><rect x="413.06" y="331.26" width="1.238" height="9.24" fill="#4f5e6b" shape-rendering="crispEdges"/><rect x="414.01" y="336.11" width="1.238" height="4.39" fill="#5f7181" shape-rendering="crispEdges"/><rect x="414.96" y="333.76" width="1.238" height="6.74" fill="#2e373f" shape-rendering="crispEdges"/><rect x="415.91" y="333.40" width="1.238" height="7.10" fill="#4f5e6b" shape-rendering="crispEdges"/><rect x="416.86" y="334.58" width="1.238" height="5.92" fill="#46535e" shape-rendering="crispEdges"/><rect x="417.82" y="335.47" width="1.238" height="5.03" fill="#46535e" shape-rendering="crispEdges"/><rect x="418.77" y="335.42" width="1.238" height="5.08" fill="#56687a" shape-rendering="crispEdges"/><rect x="419.72" y="332.03" width="1.238" height="8.47" fill="#4f5e6b" shape-rendering="crispEdges"/><rect x="420.67" y="335.13" width="1.238" height="5.37" fill="#4f5e6b" shape-rendering="crispEdges"/><rect x="421.62" y="333.41" width="1.238" height="7.09" fill="#56687a" shape-rendering="crispEdges"/><rect x="422.58" y="335.27" width="1.238" height="5.23" fill="#262e35" shape-rendering="crispEdges"/><rect x="423.53" y="333.18" width="1.238" height="7.32" fill="#4f5e6b" shape-rendering="crispEdges"/><rect x="424.48" y="332.91" width="1.238" height="7.59" fill="#56687a" shape-rendering="crispEdges"/><rect x="425.43" y="332.97" width="1.238" height="7.53" fill="#5f7181" shape-rendering="crispEdges"/><rect x="426.38" y="331.26" width="1.238" height="9.24" fill="#2e373f" shape-rendering="crispEdges"/><rect x="427.34" y="333.29" width="1.238" height="7.21" fill="#2e373f" shape-rendering="crispEdges"/><rect x="428.29" y="334.74" width="1.238" height="5.76" fill="#2e373f" shape-rendering="crispEdges"/><rect x="429.24" y="335.80" width="1.238" height="4.70" fill="#4f5e6b" shape-rendering="crispEdges"/><rect x="430.19" y="334.38" width="1.238" height="6.12" fill="#4f5e6b" shape-rendering="crispEdges"/><rect x="431.14" y="333.13" width="1.238" height="7.37" fill="#46535e" shape-rendering="crispEdges"/><rect x="432.10" y="335.63" width="1.238" height="4.87" fill="#4f5e6b" shape-rendering="crispEdges"/><rect x="433.05" y="327.41" width="1.238" height="13.09" fill="#46535e" shape-rendering="crispEdges"/><rect x="434.00" y="333.43" width="1.238" height="7.07" fill="#4f5e6b" shape-rendering="crispEdges"/><rect x="434.95" y="335.80" width="1.238" height="4.70" fill="#2e373f" shape-rendering="crispEdges"/><rect x="435.90" y="333.72" width="1.238" height="6.78" fill="#2e373f" shape-rendering="crispEdges"/><rect x="436.86" y="336.10" width="1.238" height="4.40" fill="#5f7181" shape-rendering="crispEdges"/><rect x="437.81" y="334.48" width="1.238" height="6.02" fill="#2e373f" shape-rendering="crispEdges"/><rect x="438.76" y="334.62" width="1.238" height="5.88" fill="#46535e" shape-rendering="crispEdges"/><rect x="439.71" y="332.80" width="1.238" height="7.70" fill="#4f5e6b" shape-rendering="crispEdges"/><rect x="440.66" y="333.21" width="1.238" height="7.29" fill="#4f5e6b" shape-rendering="crispEdges"/><rect x="441.62" y="335.48" width="1.238" height="5.02" fill="#56687a" shape-rendering="crispEdges"/><rect x="442.57" y="336.22" width="1.238" height="4.28" fill="#4f5e6b" shape-rendering="crispEdges"/><rect x="443.52" y="334.58" width="1.238" height="5.92" fill="#2e373f" shape-rendering="crispEdges"/><rect x="444.47" y="336.28" width="1.238" height="4.22" fill="#4f5e6b" shape-rendering="crispEdges"/><rect x="445.42" y="334.82" width="1.238" height="5.68" fill="#2e373f" shape-rendering="crispEdges"/><rect x="446.38" y="332.03" width="1.238" height="8.47" fill="#2e373f" shape-rendering="crispEdges"/><rect x="447.33" y="334.27" width="1.238" height="6.23" fill="#4f5e6b" shape-rendering="crispEdges"/><rect x="448.28" y="333.97" width="1.238" height="6.53" fill="#262e35" shape-rendering="crispEdges"/><rect x="449.23" y="334.63" width="1.238" height="5.87" fill="#46535e" shape-rendering="crispEdges"/><rect x="450.18" y="334.75" width="1.238" height="5.75" fill="#4f5e6b" shape-rendering="crispEdges"/><rect x="451.14" y="333.98" width="1.238" height="6.52" fill="#56687a" shape-rendering="crispEdges"/><rect x="452.09" y="333.21" width="1.238" height="7.29" fill="#4f5e6b" shape-rendering="crispEdges"/><rect x="453.04" y="332.80" width="1.238" height="7.70" fill="#46535e" shape-rendering="crispEdges"/><rect x="453.99" y="334.89" width="1.238" height="5.61" fill="#262e35" shape-rendering="crispEdges"/><rect x="454.94" y="336.03" width="1.238" height="4.47" fill="#262e35" shape-rendering="crispEdges"/><rect x="455.90" y="335.36" width="1.238" height="5.14" fill="#5f7181" shape-rendering="crispEdges"/><rect x="456.85" y="335.68" width="1.238" height="4.82" fill="#4f5e6b" shape-rendering="crispEdges"/><rect x="457.80" y="335.83" width="1.238" height="4.67" fill="#56687a" shape-rendering="crispEdges"/><rect x="458.75" y="333.96" width="1.238" height="6.54" fill="#46535e" shape-rendering="crispEdges"/><rect x="459.70" y="332.03" width="1.238" height="8.47" fill="#4f5e6b" shape-rendering="crispEdges"/><rect x="460.66" y="333.60" width="1.238" height="6.90" fill="#5f7181" shape-rendering="crispEdges"/><rect x="461.61" y="334.58" width="1.238" height="5.92" fill="#4f5e6b" shape-rendering="crispEdges"/><rect x="462.56" y="335.95" width="1.238" height="4.55" fill="#4f5e6b" shape-rendering="crispEdges"/><rect x="463.51" y="333.74" width="1.238" height="6.76" fill="#4f5e6b" shape-rendering="crispEdges"/><rect x="464.46" y="334.50" width="1.238" height="6.00" fill="#4f5e6b" shape-rendering="crispEdges"/><rect x="465.42" y="335.65" width="1.238" height="4.85" fill="#262e35" shape-rendering="crispEdges"/><rect x="466.37" y="336.43" width="1.238" height="4.07" fill="#5f7181" shape-rendering="crispEdges"/><rect x="467.32" y="334.44" width="1.238" height="6.06" fill="#4f5e6b" shape-rendering="crispEdges"/><rect x="468.27" y="334.89" width="1.238" height="5.61" fill="#2e373f" shape-rendering="crispEdges"/><rect x="469.22" y="335.85" width="1.238" height="4.65" fill="#262e35" shape-rendering="crispEdges"/><rect x="470.18" y="336.51" width="1.238" height="3.99" fill="#56687a" shape-rendering="crispEdges"/><rect x="471.13" y="336.85" width="1.238" height="3.65" fill="#56687a" shape-rendering="crispEdges"/><rect x="472.08" y="337.10" width="1.238" height="3.40" fill="#2e373f" shape-rendering="crispEdges"/><rect x="473.03" y="335.89" width="1.238" height="4.61" fill="#5f7181" shape-rendering="crispEdges"/><rect x="473.98" y="337.18" width="1.238" height="3.32" fill="#56687a" shape-rendering="crispEdges"/><rect x="474.94" y="335.83" width="1.238" height="4.67" fill="#56687a" shape-rendering="crispEdges"/><rect x="475.89" y="335.91" width="1.238" height="4.59" fill="#4f5e6b" shape-rendering="crispEdges"/><rect x="476.84" y="337.05" width="1.238" height="3.45" fill="#46535e" shape-rendering="crispEdges"/><rect x="477.79" y="336.80" width="1.238" height="3.70" fill="#4f5e6b" shape-rendering="crispEdges"/><rect x="478.74" y="337.23" width="1.238" height="3.27" fill="#56687a" shape-rendering="crispEdges"/><rect x="479.70" y="337.39" width="1.238" height="3.11" fill="#46535e" shape-rendering="crispEdges"/><rect x="480.65" y="337.07" width="1.238" height="3.43" fill="#46535e" shape-rendering="crispEdges"/><rect x="481.60" y="337.25" width="1.238" height="3.25" fill="#262e35" shape-rendering="crispEdges"/><rect x="482.55" y="335.52" width="1.238" height="4.98" fill="#5f7181" shape-rendering="crispEdges"/><rect x="483.50" y="335.66" width="1.238" height="4.84" fill="#56687a" shape-rendering="crispEdges"/><rect x="484.46" y="336.72" width="1.238" height="3.78" fill="#2e373f" shape-rendering="crispEdges"/><rect x="485.41" y="335.56" width="1.238" height="4.94" fill="#2e373f" shape-rendering="crispEdges"/><rect x="486.36" y="336.62" width="1.238" height="3.88" fill="#56687a" shape-rendering="crispEdges"/><rect x="487.31" y="337.61" width="1.238" height="2.89" fill="#4f5e6b" shape-rendering="crispEdges"/><rect x="488.26" y="336.04" width="1.238" height="4.46" fill="#4f5e6b" shape-rendering="crispEdges"/><rect x="489.22" y="336.94" width="1.238" height="3.56" fill="#4f5e6b" shape-rendering="crispEdges"/><rect x="490.17" y="337.34" width="1.238" height="3.16" fill="#4f5e6b" shape-rendering="crispEdges"/><rect x="491.12" y="336.59" width="1.238" height="3.91" fill="#46535e" shape-rendering="crispEdges"/><rect x="492.07" y="337.45" width="1.238" height="3.05" fill="#2e373f" shape-rendering="crispEdges"/><rect x="493.02" y="336.23" width="1.238" height="4.27" fill="#4f5e6b" shape-rendering="crispEdges"/><rect x="493.98" y="337.52" width="1.238" height="2.98" fill="#4f5e6b" shape-rendering="crispEdges"/><rect x="494.93" y="337.20" width="1.238" height="3.30" fill="#56687a" shape-rendering="crispEdges"/><rect x="495.88" y="336.19" width="1.238" height="4.31" fill="#262e35" shape-rendering="crispEdges"/><rect x="496.83" y="336.40" width="1.238" height="4.10" fill="#56687a" shape-rendering="crispEdges"/><rect x="497.78" y="337.07" width="1.238" height="3.43" fill="#4f5e6b" shape-rendering="crispEdges"/><rect x="498.74" y="337.32" width="1.238" height="3.18" fill="#4f5e6b" shape-rendering="crispEdges"/><rect x="499.69" y="336.63" width="1.238" height="3.87" fill="#4f5e6b" shape-rendering="crispEdges"/><rect x="500.64" y="337.92" width="1.238" height="2.58" fill="#4f5e6b" shape-rendering="crispEdges"/><rect x="501.59" y="338.08" width="1.238" height="2.42" fill="#56687a" shape-rendering="crispEdges"/><rect x="502.54" y="337.39" width="1.238" height="3.11" fill="#2e373f" shape-rendering="crispEdges"/><rect x="503.50" y="337.23" width="1.238" height="3.27" fill="#56687a" shape-rendering="crispEdges"/><rect x="504.45" y="337.82" width="1.238" height="2.68" fill="#5f7181" shape-rendering="crispEdges"/><rect x="505.40" y="338.31" width="1.238" height="2.19" fill="#56687a" shape-rendering="crispEdges"/><rect x="507.30" y="338.96" width="1.238" height="1.54" fill="#4f5e6b" shape-rendering="crispEdges"/><rect x="508.26" y="339.73" width="1.238" height="0.77" fill="#4f5e6b" shape-rendering="crispEdges"/><rect x="509.21" y="338.19" width="1.238" height="2.31" fill="#262e35" shape-rendering="crispEdges"/><rect x="510.16" y="338.96" width="1.238" height="1.54" fill="#56687a" shape-rendering="crispEdges"/><rect x="511.11" y="339.73" width="1.238" height="0.77" fill="#4f5e6b" shape-rendering="crispEdges"/><rect x="512.06" y="338.19" width="1.238" height="2.31" fill="#4f5e6b" shape-rendering="crispEdges"/><rect x="513.97" y="338.19" width="1.238" height="2.31" fill="#5f7181" shape-rendering="crispEdges"/><rect x="515.87" y="338.96" width="1.238" height="1.54" fill="#5f7181" shape-rendering="crispEdges"/><rect x="516.82" y="338.19" width="1.238" height="2.31" fill="#56687a" shape-rendering="crispEdges"/><rect x="517.78" y="339.73" width="1.238" height="0.77" fill="#262e35" shape-rendering="crispEdges"/><rect x="518.73" y="339.73" width="1.238" height="0.77" fill="#2e373f" shape-rendering="crispEdges"/><rect x="519.68" y="339.73" width="1.238" height="0.77" fill="#4f5e6b" shape-rendering="crispEdges"/><rect x="520.63" y="339.73" width="1.238" height="0.77" fill="#4f5e6b" shape-rendering="crispEdges"/><rect x="523.49" y="339.73" width="1.238" height="0.77" fill="#2e373f" shape-rendering="crispEdges"/><rect x="524.44" y="339.73" width="1.238" height="0.77" fill="#5f7181" shape-rendering="crispEdges"/><rect x="525.39" y="338.96" width="1.238" height="1.54" fill="#46535e" shape-rendering="crispEdges"/><rect x="526.34" y="338.19" width="1.238" height="2.31" fill="#46535e" shape-rendering="crispEdges"/><rect x="527.30" y="339.73" width="1.238" height="0.77" fill="#5f7181" shape-rendering="crispEdges"/><rect x="528.25" y="338.19" width="1.238" height="2.31" fill="#2e373f" shape-rendering="crispEdges"/><rect x="529.20" y="338.19" width="1.238" height="2.31" fill="#2e373f" shape-rendering="crispEdges"/><rect x="531.10" y="338.96" width="1.238" height="1.54" fill="#46535e" shape-rendering="crispEdges"/><rect x="540.62" y="338.96" width="1.238" height="1.54" fill="#2e373f" shape-rendering="crispEdges"/><rect x="541.58" y="338.19" width="1.238" height="2.31" fill="#5f7181" shape-rendering="crispEdges"/><rect x="547.29" y="338.19" width="1.238" height="2.31" fill="#5f7181" shape-rendering="crispEdges"/><rect x="553.00" y="339.73" width="1.238" height="0.77" fill="#56687a" shape-rendering="crispEdges"/><rect x="553.95" y="339.73" width="1.238" height="0.77" fill="#262e35" shape-rendering="crispEdges"/><rect x="556.81" y="339.73" width="1.238" height="0.77" fill="#4f5e6b" shape-rendering="crispEdges"/><rect x="560.62" y="338.19" width="1.238" height="2.31" fill="#2e373f" shape-rendering="crispEdges"/><rect x="563.47" y="339.73" width="1.238" height="0.77" fill="#4f5e6b" shape-rendering="crispEdges"/><rect x="565.38" y="339.73" width="1.238" height="0.77" fill="#5f7181" shape-rendering="crispEdges"/><rect x="575.85" y="338.19" width="1.238" height="2.31" fill="#56687a" shape-rendering="crispEdges"/><rect x="576.80" y="339.73" width="1.238" height="0.77" fill="#262e35" shape-rendering="crispEdges"/><rect x="577.75" y="339.73" width="1.238" height="0.77" fill="#46535e" shape-rendering="crispEdges"/><text transform="translate(185.50,342.8) rotate(-90) scale(0.1)" font-size="50" fill="#707070" text-anchor="end" font-family="Liberation Sans">4</text><text transform="translate(191.21,342.8) rotate(-90) scale(0.1)" font-size="50" fill="#707070" text-anchor="end" font-family="Liberation Sans">10</text><text transform="translate(196.92,342.8) rotate(-90) scale(0.1)" font-size="50" fill="#707070" text-anchor="end" font-family="Liberation Sans">16</text><text transform="translate(202.64,342.8) rotate(-90) scale(0.1)" font-size="50" fill="#707070" text-anchor="end" font-family="Liberation Sans">22</text><text transform="translate(208.35,342.8) rotate(-90) scale(0.1)" font-size="50" fill="#707070" text-anchor="end" font-family="Liberation Sans">28</text><text transform="translate(214.06,342.8) rotate(-90) scale(0.1)" font-size="50" fill="#707070" text-anchor="end" font-family="Liberation Sans">34</text><text transform="translate(219.77,342.8) rotate(-90) scale(0.1)" font-size="50" fill="#707070" text-anchor="end" font-family="Liberation Sans">40</text><text transform="translate(225.48,342.8) rotate(-90) scale(0.1)" font-size="50" fill="#707070" text-anchor="end" font-family="Liberation Sans">46</text><text transform="translate(231.20,342.8) rotate(-90) scale(0.1)" font-size="50" fill="#707070" text-anchor="end" font-family="Liberation Sans">52</text><text transform="translate(236.91,342.8) rotate(-90) scale(0.1)" font-size="50" fill="#707070" text-anchor="end" font-family="Liberation Sans">58</text><text transform="translate(242.62,342.8) rotate(-90) scale(0.1)" font-size="50" fill="#707070" text-anchor="end" font-family="Liberation Sans">64</text><text transform="translate(248.33,342.8) rotate(-90) scale(0.1)" font-size="50" fill="#707070" text-anchor="end" font-family="Liberation Sans">70</text><text transform="translate(254.04,342.8) rotate(-90) scale(0.1)" font-size="50" fill="#707070" text-anchor="end" font-family="Liberation Sans">76</text><text transform="translate(259.76,342.8) rotate(-90) scale(0.1)" font-size="50" fill="#707070" text-anchor="end" font-family="Liberation Sans">82</text><text transform="translate(265.47,342.8) rotate(-90) scale(0.1)" font-size="50" fill="#707070" text-anchor="end" font-family="Liberation Sans">88</text><text transform="translate(271.18,342.8) rotate(-90) scale(0.1)" font-size="50" fill="#707070" text-anchor="end" font-family="Liberation Sans">94</text><text transform="translate(276.89,342.8) rotate(-90) scale(0.1)" font-size="50" fill="#707070" text-anchor="end" font-family="Liberation Sans">100</text><text transform="translate(282.60,342.8) rotate(-90) scale(0.1)" font-size="50" fill="#707070" text-anchor="end" font-family="Liberation Sans">106</text><text transform="translate(288.32,342.8) rotate(-90) scale(0.1)" font-size="50" fill="#707070" text-anchor="end" font-family="Liberation Sans">112</text><text transform="translate(294.03,342.8) rotate(-90) scale(0.1)" font-size="50" fill="#707070" text-anchor="end" font-family="Liberation Sans">118</text><text transform="translate(299.74,342.8) rotate(-90) scale(0.1)" font-size="50" fill="#707070" text-anchor="end" font-family="Liberation Sans">124</text><text transform="translate(305.45,342.8) rotate(-90) scale(0.1)" font-size="50" fill="#707070" text-anchor="end" font-family="Liberation Sans">130</text><text transform="translate(311.16,342.8) rotate(-90) scale(0.1)" font-size="50" fill="#707070" text-anchor="end" font-family="Liberation Sans">136</text><text transform="translate(316.88,342.8) rotate(-90) scale(0.1)" font-size="50" fill="#707070" text-anchor="end" font-family="Liberation Sans">142</text><text transform="translate(322.59,342.8) rotate(-90) scale(0.1)" font-size="50" fill="#707070" text-anchor="end" font-family="Liberation Sans">148</text><text transform="translate(328.30,342.8) rotate(-90) scale(0.1)" font-size="50" fill="#707070" text-anchor="end" font-family="Liberation Sans">154</text><text transform="translate(334.01,342.8) rotate(-90) scale(0.1)" font-size="50" fill="#707070" text-anchor="end" font-family="Liberation Sans">160</text><text transform="translate(339.72,342.8) rotate(-90) scale(0.1)" font-size="50" fill="#707070" text-anchor="end" font-family="Liberation Sans">166</text><text transform="translate(345.44,342.8) rotate(-90) scale(0.1)" font-size="50" fill="#707070" text-anchor="end" font-family="Liberation Sans">172</text><text transform="translate(351.15,342.8) rotate(-90) scale(0.1)" font-size="50" fill="#707070" text-anchor="end" font-family="Liberation Sans">178</text><text transform="translate(356.86,342.8) rotate(-90) scale(0.1)" font-size="50" fill="#707070" text-anchor="end" font-family="Liberation Sans">184</text><text transform="translate(362.57,342.8) rotate(-90) scale(0.1)" font-size="50" fill="#707070" text-anchor="end" font-family="Liberation Sans">190</text><text transform="translate(368.28,342.8) rotate(-90) scale(0.1)" font-size="50" fill="#707070" text-anchor="end" font-family="Liberation Sans">196</text><text transform="translate(374.00,342.8) rotate(-90) scale(0.1)" font-size="50" fill="#707070" text-anchor="end" font-family="Liberation Sans">202</text><text transform="translate(379.71,342.8) rotate(-90) scale(0.1)" font-size="50" fill="#707070" text-anchor="end" font-family="Liberation Sans">208</text><text transform="translate(385.42,342.8) rotate(-90) scale(0.1)" font-size="50" fill="#707070" text-anchor="end" font-family="Liberation Sans">214</text><text transform="translate(391.13,342.8) rotate(-90) scale(0.1)" font-size="50" fill="#707070" text-anchor="end" font-family="Liberation Sans">220</text><text transform="translate(396.84,342.8) rotate(-90) scale(0.1)" font-size="50" fill="#707070" text-anchor="end" font-family="Liberation Sans">226</text><text transform="translate(402.56,342.8) rotate(-90) scale(0.1)" font-size="50" fill="#707070" text-anchor="end" font-family="Liberation Sans">232</text><text transform="translate(408.27,342.8) rotate(-90) scale(0.1)" font-size="50" fill="#707070" text-anchor="end" font-family="Liberation Sans">238</text><text transform="translate(413.98,342.8) rotate(-90) scale(0.1)" font-size="50" fill="#707070" text-anchor="end" font-family="Liberation Sans">244</text><text transform="translate(419.69,342.8) rotate(-90) scale(0.1)" font-size="50" fill="#707070" text-anchor="end" font-family="Liberation Sans">250</text><text transform="translate(425.40,342.8) rotate(-90) scale(0.1)" font-size="50" fill="#707070" text-anchor="end" font-family="Liberation Sans">256</text><text transform="translate(431.12,342.8) rotate(-90) scale(0.1)" font-size="50" fill="#707070" text-anchor="end" font-family="Liberation Sans">262</text><text transform="translate(436.83,342.8) rotate(-90) scale(0.1)" font-size="50" fill="#707070" text-anchor="end" font-family="Liberation Sans">268</text><text transform="translate(442.54,342.8) rotate(-90) scale(0.1)" font-size="50" fill="#707070" text-anchor="end" font-family="Liberation Sans">274</text><text transform="translate(448.25,342.8) rotate(-90) scale(0.1)" font-size="50" fill="#707070" text-anchor="end" font-family="Liberation Sans">280</text><text transform="translate(453.96,342.8) rotate(-90) scale(0.1)" font-size="50" fill="#707070" text-anchor="end" font-family="Liberation Sans">286</text><text transform="translate(459.68,342.8) rotate(-90) scale(0.1)" font-size="50" fill="#707070" text-anchor="end" font-family="Liberation Sans">292</text><text transform="translate(465.39,342.8) rotate(-90) scale(0.1)" font-size="50" fill="#707070" text-anchor="end" font-family="Liberation Sans">298</text><text transform="translate(471.10,342.8) rotate(-90) scale(0.1)" font-size="50" fill="#707070" text-anchor="end" font-family="Liberation Sans">304</text><text transform="translate(476.81,342.8) rotate(-90) scale(0.1)" font-size="50" fill="#707070" text-anchor="end" font-family="Liberation Sans">310</text><text transform="translate(482.52,342.8) rotate(-90) scale(0.1)" font-size="50" fill="#707070" text-anchor="end" font-family="Liberation Sans">316</text><text transform="translate(488.24,342.8) rotate(-90) scale(0.1)" font-size="50" fill="#707070" text-anchor="end" font-family="Liberation Sans">322</text><text transform="translate(493.95,342.8) rotate(-90) scale(0.1)" font-size="50" fill="#707070" text-anchor="end" font-family="Liberation Sans">328</text><text transform="translate(499.66,342.8) rotate(-90) scale(0.1)" font-size="50" fill="#707070" text-anchor="end" font-family="Liberation Sans">334</text><text transform="translate(505.37,342.8) rotate(-90) scale(0.1)" font-size="50" fill="#707070" text-anchor="end" font-family="Liberation Sans">340</text><text transform="translate(511.08,342.8) rotate(-90) scale(0.1)" font-size="50" fill="#707070" text-anchor="end" font-family="Liberation Sans">346</text><text transform="translate(516.80,342.8) rotate(-90) scale(0.1)" font-size="50" fill="#707070" text-anchor="end" font-family="Liberation Sans">352</text><text transform="translate(522.51,342.8) rotate(-90) scale(0.1)" font-size="50" fill="#707070" text-anchor="end" font-family="Liberation Sans">358</text><text transform="translate(528.22,342.8) rotate(-90) scale(0.1)" font-size="50" fill="#707070" text-anchor="end" font-family="Liberation Sans">364</text><text transform="translate(533.93,342.8) rotate(-90) scale(0.1)" font-size="50" fill="#707070" text-anchor="end" font-family="Liberation Sans">370</text><text transform="translate(539.64,342.8) rotate(-90) scale(0.1)" font-size="50" fill="#707070" text-anchor="end" font-family="Liberation Sans">376</text><text transform="translate(545.36,342.8) rotate(-90) scale(0.1)" font-size="50" fill="#707070" text-anchor="end" font-family="Liberation Sans">382</text><text transform="translate(551.07,342.8) rotate(-90) scale(0.1)" font-size="50" fill="#707070" text-anchor="end" font-family="Liberation Sans">388</text><text transform="translate(556.78,342.8) rotate(-90) scale(0.1)" font-size="50" fill="#707070" text-anchor="end" font-family="Liberation Sans">394</text><text transform="translate(562.49,342.8) rotate(-90) scale(0.1)" font-size="50" fill="#707070" text-anchor="end" font-family="Liberation Sans">400</text><text transform="translate(568.20,342.8) rotate(-90) scale(0.1)" font-size="50" fill="#707070" text-anchor="end" font-family="Liberation Sans">406</text><text transform="translate(573.92,342.8) rotate(-90) scale(0.1)" font-size="50" fill="#707070" text-anchor="end" font-family="Liberation Sans">412</text><text transform="translate(579.63,342.8) rotate(-90) scale(0.1)" font-size="50" fill="#707070" text-anchor="end" font-family="Liberation Sans">418</text><text transform="translate(585.34,342.8) rotate(-90) scale(0.1)" font-size="50" fill="#707070" text-anchor="end" font-family="Liberation Sans">424</text></svg>
<div class="gold" style="left:79.8px;top:366.8px;width:513.9px;height:12.7px"></div>
<div class="f" style="position:absolute;left:82.50px;top:334.30px;height:78.00px;line-height:78.00px;font-size:60px;color:#2e2e2e;white-space:nowrap;transform:scale(0.09995,0.1);transform-origin:left center;-webkit-text-stroke:1.1px currentColor;">1回目商品別　購入会員転換率</div>
<div class="wh" style="left:79.8px;top:381px;width:513.9px;height:80px"></div>
<div class="abs" style="left:586.5px;top:379px;width:7.3px;height:10px;background:#4e95a5"></div>
<div class="abs" style="left:586.5px;top:389px;width:7.3px;height:69px;background:#efefef"></div>
<div class="abs" style="left:587px;top:389.3px;width:6.3px;height:8.2px;background:#d6d6d6"></div>
<div class="abs" style="left:113.5px;top:397.35px;width:473px;height:8.05px;background:#f3f3f3"></div>
<div class="abs" style="left:113.5px;top:413.45px;width:473px;height:8.05px;background:#f3f3f3"></div>
<div class="abs" style="left:113.5px;top:429.55px;width:473px;height:8.05px;background:#f3f3f3"></div>
<div class="abs" style="left:113.5px;top:445.65px;width:473px;height:8.05px;background:#f3f3f3"></div>
<div class="abs" style="left:79.8px;top:388.80px;width:506.7px;height:0.8px;background:#dcdcdc"></div>
<div class="abs" style="left:79.8px;top:396.85px;width:506.7px;height:0.8px;background:#dcdcdc"></div>
<div class="abs" style="left:79.8px;top:412.90px;width:506.7px;height:0.8px;background:#dcdcdc"></div>
<div class="abs" style="left:79.8px;top:445.10px;width:506.7px;height:0.8px;background:#dcdcdc"></div>
<div class="abs" style="left:229.9px;top:381px;width:0.8px;height:80px;background:#dedede"></div>
<div class="f" style="position:absolute;left:82.50px;top:353.00px;height:65.00px;line-height:65.00px;font-size:50px;color:#5a5a5a;white-space:nowrap;transform:scale(0.07750,0.1);transform-origin:left center;">基準購…</div>
<div class="f" style="position:absolute;left:114.60px;top:353.00px;height:65.00px;line-height:65.00px;font-size:50px;color:#5a5a5a;white-space:nowrap;transform:scale(0.08857,0.1);transform-origin:left center;">基準購入商品名</div>
<div class="f" style="position:absolute;right:307.30px;top:353.00px;height:65.00px;line-height:65.00px;font-size:50px;color:#5a5a5a;white-space:nowrap;transform:scale(0.08686,0.1);transform-origin:right center;">基準購入会員数</div>
<div class="f" style="position:absolute;right:229.10px;top:353.00px;height:65.00px;line-height:65.00px;font-size:50px;color:#5a5a5a;white-space:nowrap;transform:scale(0.08762,0.1);transform-origin:right center;">基準購入会員数の割合</div>
<div class="f" style="position:absolute;right:158.20px;top:353.00px;height:65.00px;line-height:65.00px;font-size:50px;color:#5a5a5a;white-space:nowrap;transform:scale(0.08800,0.1);transform-origin:right center;">転換購入会員数</div>
<div class="f" style="position:absolute;right:86.80px;top:353.00px;height:65.00px;line-height:65.00px;font-size:50px;color:#5a5a5a;white-space:nowrap;transform:scale(0.09000,0.1);transform-origin:right center;">転換率</div>
<div class="f" style="position:absolute;right:15.90px;top:353.00px;height:65.00px;line-height:65.00px;font-size:50px;color:#5a5a5a;white-space:nowrap;transform:scale(0.08079,0.1);transform-origin:right center;">転換までの日数平均</div>
<svg class="abs" style="left:101.9px;top:383px" width="5" height="5" viewBox="0 0 5 5"><path d="M0 0.5H4M0.6 0.5V4.2M0.6 2.3H2.6" stroke="#8a8a8a" stroke-width="0.65" fill="none"/></svg>
<svg class="abs" style="left:219.6px;top:383px" width="5" height="5" viewBox="0 0 5 5"><path d="M0 0.5H4M0.6 0.5V4.2M0.6 2.3H2.6" stroke="#8a8a8a" stroke-width="0.65" fill="none"/></svg>
<svg class="abs" style="left:295.2px;top:383px" width="5" height="5" viewBox="0 0 5 5"><path d="M0 0.5H4M0.6 0.5V4.2M0.6 2.3H2.6" stroke="#8a8a8a" stroke-width="0.65" fill="none"/></svg>
<div class="f" style="position:absolute;left:82.50px;top:360.50px;height:65.00px;line-height:65.00px;font-size:50px;color:#555;white-space:nowrap;transform:scale(0.09500,0.1);transform-origin:left center;">総計</div>
<div class="f" style="position:absolute;right:301.00px;top:357.25px;height:71.50px;line-height:71.50px;font-size:55.0px;color:#444;white-space:nowrap;transform:scale(0.10000,0.1);transform-origin:right center;">30,162</div>
<div class="f" style="position:absolute;right:229.80px;top:357.25px;height:71.50px;line-height:71.50px;font-size:55.0px;color:#444;white-space:nowrap;transform:scale(0.10000,0.1);transform-origin:right center;">100.00%</div>
<div class="f" style="position:absolute;right:158.20px;top:357.25px;height:71.50px;line-height:71.50px;font-size:55.0px;color:#444;white-space:nowrap;transform:scale(0.10000,0.1);transform-origin:right center;">11,691</div>
<div class="f" style="position:absolute;right:87.00px;top:357.25px;height:71.50px;line-height:71.50px;font-size:55.0px;color:#444;white-space:nowrap;transform:scale(0.10000,0.1);transform-origin:right center;">38.8%</div>
<div class="f" style="position:absolute;right:15.50px;top:357.25px;height:71.50px;line-height:71.50px;font-size:55.0px;color:#444;white-space:nowrap;transform:scale(0.10000,0.1);transform-origin:right center;">64.3</div>
<div class="f" style="position:absolute;left:82.50px;top:366.57px;height:68.90px;line-height:68.90px;font-size:53.0px;color:#444;white-space:nowrap;transform:scale(0.09437,0.1);transform-origin:left center;">2164025-06</div>
<div class="f" style="position:absolute;left:114.60px;top:368.52px;height:65.00px;line-height:65.00px;font-size:50px;color:#6a6a6a;white-space:nowrap;transform:scale(0.10000,0.1);transform-origin:left center;">ハ*****</div>
<div class="f" style="position:absolute;right:301.00px;top:365.27px;height:71.50px;line-height:71.50px;font-size:55.0px;color:#444;white-space:nowrap;transform:scale(0.10000,0.1);transform-origin:right center;">2,143</div>
<div class="f" style="position:absolute;right:229.80px;top:365.27px;height:71.50px;line-height:71.50px;font-size:55.0px;color:#444;white-space:nowrap;transform:scale(0.10000,0.1);transform-origin:right center;">7.10%</div>
<div class="f" style="position:absolute;right:158.20px;top:365.27px;height:71.50px;line-height:71.50px;font-size:55.0px;color:#444;white-space:nowrap;transform:scale(0.10000,0.1);transform-origin:right center;">760</div>
<div class="f" style="position:absolute;right:87.00px;top:365.27px;height:71.50px;line-height:71.50px;font-size:55.0px;color:#444;white-space:nowrap;transform:scale(0.10000,0.1);transform-origin:right center;">35.5%</div>
<div class="f" style="position:absolute;right:15.50px;top:365.27px;height:71.50px;line-height:71.50px;font-size:55.0px;color:#444;white-space:nowrap;transform:scale(0.10000,0.1);transform-origin:right center;">43.0</div>
<div class="f" style="position:absolute;left:114.60px;top:376.54px;height:65.00px;line-height:65.00px;font-size:50px;color:#6a6a6a;white-space:nowrap;transform:scale(0.10000,0.1);transform-origin:left center;">ミ*****</div>
<div class="f" style="position:absolute;right:301.00px;top:373.29px;height:71.50px;line-height:71.50px;font-size:55.0px;color:#444;white-space:nowrap;transform:scale(0.10000,0.1);transform-origin:right center;">500</div>
<div class="f" style="position:absolute;right:229.80px;top:373.29px;height:71.50px;line-height:71.50px;font-size:55.0px;color:#444;white-space:nowrap;transform:scale(0.10000,0.1);transform-origin:right center;">1.66%</div>
<div class="f" style="position:absolute;right:158.20px;top:373.29px;height:71.50px;line-height:71.50px;font-size:55.0px;color:#444;white-space:nowrap;transform:scale(0.10000,0.1);transform-origin:right center;">485</div>
<div class="f" style="position:absolute;right:87.00px;top:373.29px;height:71.50px;line-height:71.50px;font-size:55.0px;color:#444;white-space:nowrap;transform:scale(0.10000,0.1);transform-origin:right center;">97.0%</div>
<div class="f" style="position:absolute;right:15.50px;top:373.29px;height:71.50px;line-height:71.50px;font-size:55.0px;color:#444;white-space:nowrap;transform:scale(0.10000,0.1);transform-origin:right center;">66.3</div>
<div class="f" style="position:absolute;left:82.50px;top:382.61px;height:68.90px;line-height:68.90px;font-size:53.0px;color:#444;white-space:nowrap;transform:scale(0.09437,0.1);transform-origin:left center;">1276009-03</div>
<div class="f" style="position:absolute;left:114.60px;top:384.56px;height:65.00px;line-height:65.00px;font-size:50px;color:#6a6a6a;white-space:nowrap;transform:scale(0.10000,0.1);transform-origin:left center;">シ*****</div>
<div class="f" style="position:absolute;right:301.00px;top:381.31px;height:71.50px;line-height:71.50px;font-size:55.0px;color:#444;white-space:nowrap;transform:scale(0.10000,0.1);transform-origin:right center;">2,100</div>
<div class="f" style="position:absolute;right:229.80px;top:381.31px;height:71.50px;line-height:71.50px;font-size:55.0px;color:#444;white-space:nowrap;transform:scale(0.10000,0.1);transform-origin:right center;">6.96%</div>
<div class="f" style="position:absolute;right:158.20px;top:381.31px;height:71.50px;line-height:71.50px;font-size:55.0px;color:#444;white-space:nowrap;transform:scale(0.10000,0.1);transform-origin:right center;">511</div>
<div class="f" style="position:absolute;right:87.00px;top:381.31px;height:71.50px;line-height:71.50px;font-size:55.0px;color:#444;white-space:nowrap;transform:scale(0.10000,0.1);transform-origin:right center;">24.3%</div>
<div class="f" style="position:absolute;right:15.50px;top:381.31px;height:71.50px;line-height:71.50px;font-size:55.0px;color:#444;white-space:nowrap;transform:scale(0.10000,0.1);transform-origin:right center;">42.0</div>
<div class="f" style="position:absolute;left:114.60px;top:392.58px;height:65.00px;line-height:65.00px;font-size:50px;color:#6a6a6a;white-space:nowrap;transform:scale(0.10000,0.1);transform-origin:left center;">｜*****</div>
<div class="f" style="position:absolute;right:301.00px;top:389.33px;height:71.50px;line-height:71.50px;font-size:55.0px;color:#444;white-space:nowrap;transform:scale(0.10000,0.1);transform-origin:right center;">264</div>
<div class="f" style="position:absolute;right:229.80px;top:389.33px;height:71.50px;line-height:71.50px;font-size:55.0px;color:#444;white-space:nowrap;transform:scale(0.10000,0.1);transform-origin:right center;">0.88%</div>
<div class="f" style="position:absolute;right:158.20px;top:389.33px;height:71.50px;line-height:71.50px;font-size:55.0px;color:#444;white-space:nowrap;transform:scale(0.10000,0.1);transform-origin:right center;">73</div>
<div class="f" style="position:absolute;right:87.00px;top:389.33px;height:71.50px;line-height:71.50px;font-size:55.0px;color:#444;white-space:nowrap;transform:scale(0.10000,0.1);transform-origin:right center;">27.7%</div>
<div class="f" style="position:absolute;right:15.50px;top:389.33px;height:71.50px;line-height:71.50px;font-size:55.0px;color:#444;white-space:nowrap;transform:scale(0.10000,0.1);transform-origin:right center;">113.8</div>
<div class="f" style="position:absolute;left:114.60px;top:400.60px;height:65.00px;line-height:65.00px;font-size:50px;color:#6a6a6a;white-space:nowrap;transform:scale(0.10000,0.1);transform-origin:left center;">紙*****</div>
<div class="f" style="position:absolute;right:301.00px;top:397.35px;height:71.50px;line-height:71.50px;font-size:55.0px;color:#444;white-space:nowrap;transform:scale(0.10000,0.1);transform-origin:right center;">124</div>
<div class="f" style="position:absolute;right:229.80px;top:397.35px;height:71.50px;line-height:71.50px;font-size:55.0px;color:#444;white-space:nowrap;transform:scale(0.10000,0.1);transform-origin:right center;">0.41%</div>
<div class="f" style="position:absolute;right:158.20px;top:397.35px;height:71.50px;line-height:71.50px;font-size:55.0px;color:#444;white-space:nowrap;transform:scale(0.10000,0.1);transform-origin:right center;">100</div>
<div class="f" style="position:absolute;right:87.00px;top:397.35px;height:71.50px;line-height:71.50px;font-size:55.0px;color:#444;white-space:nowrap;transform:scale(0.10000,0.1);transform-origin:right center;">80.6%</div>
<div class="f" style="position:absolute;right:15.50px;top:397.35px;height:71.50px;line-height:71.50px;font-size:55.0px;color:#444;white-space:nowrap;transform:scale(0.10000,0.1);transform-origin:right center;">50.5</div>
<div class="f" style="position:absolute;left:114.60px;top:408.62px;height:65.00px;line-height:65.00px;font-size:50px;color:#6a6a6a;white-space:nowrap;transform:scale(0.10000,0.1);transform-origin:left center;">e*****</div>
<div class="f" style="position:absolute;right:301.00px;top:405.37px;height:71.50px;line-height:71.50px;font-size:55.0px;color:#444;white-space:nowrap;transform:scale(0.10000,0.1);transform-origin:right center;">4</div>
<div class="f" style="position:absolute;right:229.80px;top:405.37px;height:71.50px;line-height:71.50px;font-size:55.0px;color:#444;white-space:nowrap;transform:scale(0.10000,0.1);transform-origin:right center;">0.01%</div>
<div class="f" style="position:absolute;right:158.20px;top:405.37px;height:71.50px;line-height:71.50px;font-size:55.0px;color:#444;white-space:nowrap;transform:scale(0.10000,0.1);transform-origin:right center;">0</div>
<div class="f" style="position:absolute;right:87.00px;top:405.37px;height:71.50px;line-height:71.50px;font-size:55.0px;color:#444;white-space:nowrap;transform:scale(0.10000,0.1);transform-origin:right center;">0.0%</div>
<div class="f" style="position:absolute;left:82.50px;top:414.69px;height:68.90px;line-height:68.90px;font-size:53.0px;color:#444;white-space:nowrap;transform:scale(0.09245,0.1);transform-origin:left center;">4412469-A1</div>
<div class="f" style="position:absolute;left:114.60px;top:416.64px;height:65.00px;line-height:65.00px;font-size:50px;color:#6a6a6a;white-space:nowrap;transform:scale(0.10000,0.1);transform-origin:left center;">す*****</div>
<div class="f" style="position:absolute;right:301.00px;top:413.39px;height:71.50px;line-height:71.50px;font-size:55.0px;color:#444;white-space:nowrap;transform:scale(0.10000,0.1);transform-origin:right center;">1,894</div>
<div class="f" style="position:absolute;right:229.80px;top:413.39px;height:71.50px;line-height:71.50px;font-size:55.0px;color:#444;white-space:nowrap;transform:scale(0.10000,0.1);transform-origin:right center;">6.28%</div>
<div class="f" style="position:absolute;right:158.20px;top:413.39px;height:71.50px;line-height:71.50px;font-size:55.0px;color:#444;white-space:nowrap;transform:scale(0.10000,0.1);transform-origin:right center;">616</div>
<div class="f" style="position:absolute;right:87.00px;top:413.39px;height:71.50px;line-height:71.50px;font-size:55.0px;color:#444;white-space:nowrap;transform:scale(0.10000,0.1);transform-origin:right center;">32.5%</div>
<div class="f" style="position:absolute;right:15.50px;top:413.39px;height:71.50px;line-height:71.50px;font-size:55.0px;color:#444;white-space:nowrap;transform:scale(0.10000,0.1);transform-origin:right center;">43.5</div>
<div class="f" style="position:absolute;left:114.60px;top:424.66px;height:65.00px;line-height:65.00px;font-size:50px;color:#6a6a6a;white-space:nowrap;transform:scale(0.10000,0.1);transform-origin:left center;">Ω*****</div>
<div class="f" style="position:absolute;right:301.00px;top:421.41px;height:71.50px;line-height:71.50px;font-size:55.0px;color:#444;white-space:nowrap;transform:scale(0.10000,0.1);transform-origin:right center;">64</div>
<div class="f" style="position:absolute;right:229.80px;top:421.41px;height:71.50px;line-height:71.50px;font-size:55.0px;color:#444;white-space:nowrap;transform:scale(0.10000,0.1);transform-origin:right center;">0.21%</div>
<div class="f" style="position:absolute;right:158.20px;top:421.41px;height:71.50px;line-height:71.50px;font-size:55.0px;color:#444;white-space:nowrap;transform:scale(0.10000,0.1);transform-origin:right center;">19</div>
<div class="f" style="position:absolute;right:87.00px;top:421.41px;height:71.50px;line-height:71.50px;font-size:55.0px;color:#444;white-space:nowrap;transform:scale(0.10000,0.1);transform-origin:right center;">29.7%</div>
<div class="f" style="position:absolute;right:15.50px;top:421.41px;height:71.50px;line-height:71.50px;font-size:55.0px;color:#444;white-space:nowrap;transform:scale(0.10000,0.1);transform-origin:right center;">50.2</div>
</body></html>
